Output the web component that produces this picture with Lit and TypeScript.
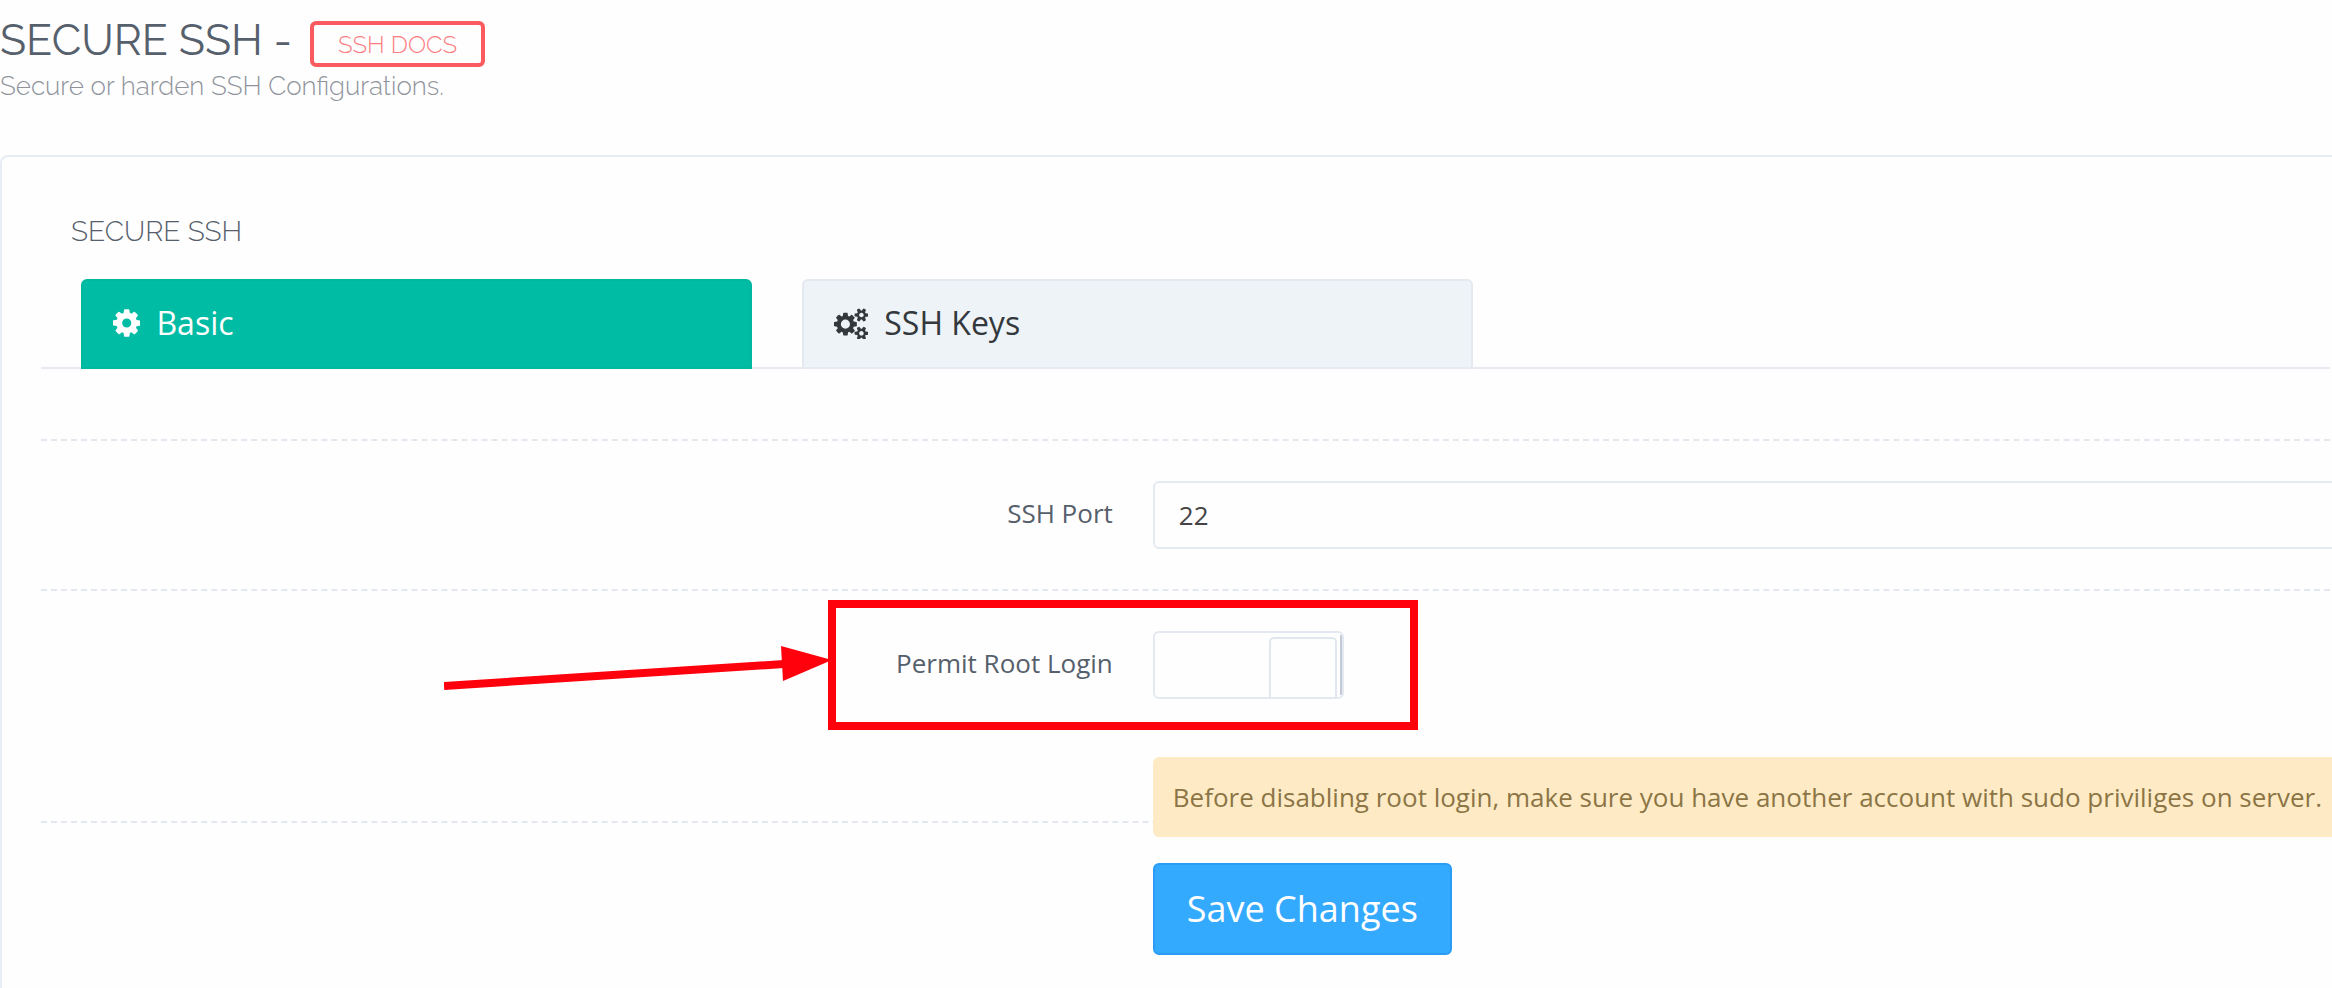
import { LitElement, html, css, svg } from "lit";
import { customElement, state } from "lit/decorators.js";

const cog = svg`<path d="M1024 896q0-106-75-181t-181-75-181 75-75 181 75 181 181 75 181-75 75-181zm512-109v222q0 12-8 23t-20 13l-185 28q-19 54-39 91 35 50 107 138 10 12 10 25t-9 23q-27 37-99 108t-94 71q-12 0-26-9l-138-108q-44 23-91 38-16 136-29 186-7 28-36 28h-222q-14 0-24.5-8.5t-11.5-21.5l-28-184q-49-16-90-37l-141 107q-10 9-25 9-14 0-25-11-126-114-165-168-7-10-7-23 0-12 8-23 15-21 51-66.5t54-70.5q-27-50-41-99l-183-27q-13-2-21-12.5t-8-23.5v-222q0-12 8-23t19-13l186-28q14-46 39-92-40-57-107-138-10-12-10-24 0-10 9-23 26-36 98.5-107.5t94.5-71.5q13 0 26 10l138 107q44-23 91-38 16-136 29-186 7-28 36-28h222q14 0 24.5 8.5t11.5 21.5l28 184q49 16 90 37l142-107q9-9 24-9 13 0 25 10 129 119 165 170 7 8 7 22 0 12-8 23-15 21-51 66.5t-54 70.5q26 50 41 98l183 28q13 2 21 12.5t8 23.5z"/>`;

const cogs = svg`<path d="M896 960q0-106-75-181t-181-75-181 75-75 181 75 181 181 75 181-75 75-181zm768 512q0-52-38-90t-90-38-90 38-38 90q0 53 37.5 90.5t90.5 37.5 90.5-37.5 37.5-90.5zm0-1024q0-52-38-90t-90-38-90 38-38 90q0 53 37.5 90.5t90.5 37.5 90.5-37.5 37.5-90.5zm-384 421v185q0 10-7 19.5t-16 10.5l-155 24q-11 35-32 76 34 48 90 115 7 11 7 20 0 12-7 19-23 30-82.5 89.5t-78.5 59.5q-11 0-21-7l-115-90q-37 19-77 31-11 108-23 155-7 24-30 24h-186q-11 0-20-7.5t-10-17.5l-23-153q-34-10-75-31l-118 89q-7 7-20 7-11 0-21-8-144-133-144-160 0-9 7-19 10-14 41-53t47-61q-23-44-35-82l-152-24q-10-1-17-9.5t-7-19.5v-185q0-10 7-19.5t16-10.5l155-24q11-35 32-76-34-48-90-115-7-11-7-20 0-12 7-20 22-30 82-89t79-59q11 0 21 7l115 90q34-18 77-32 11-108 23-154 7-24 30-24h186q11 0 20 7.5t10 17.5l23 153q34 10 75 31l118-89q8-7 20-7 11 0 21 8 144 133 144 160 0 8-7 19-12 16-42 54t-45 60q23 48 34 82l152 23q10 2 17 10.5t7 19.5zm640 533v140q0 16-149 31-12 27-30 52 51 113 51 138 0 4-4 7-122 71-124 71-8 0-46-47t-52-68q-20 2-30 2t-30-2q-14 21-52 68t-46 47q-2 0-124-71-4-3-4-7 0-25 51-138-18-25-30-52-149-15-149-31v-140q0-16 149-31 13-29 30-52-51-113-51-138 0-4 4-7 4-2 35-20t59-34 30-16q8 0 46 46.5t52 67.5q20-2 30-2t30 2q51-71 92-112l6-2q4 0 124 70 4 3 4 7 0 25-51 138 17 23 30 52 149 15 149 31zm0-1024v140q0 16-149 31-12 27-30 52 51 113 51 138 0 4-4 7-122 71-124 71-8 0-46-47t-52-68q-20 2-30 2t-30-2q-14 21-52 68t-46 47q-2 0-124-71-4-3-4-7 0-25 51-138-18-25-30-52-149-15-149-31v-140q0-16 149-31 13-29 30-52-51-113-51-138 0-4 4-7 4-2 35-20t59-34 30-16q8 0 46 46.5t52 67.5q20-2 30-2t30 2q51-71 92-112l6-2q4 0 124 70 4 3 4 7 0 25-51 138 17 23 30 52 149 15 149 31z"/>`;

@customElement("app-root")
export class AppRoot extends LitElement {
  @state() private tab = "basic";

  static styles = css`
    :host {
      display: flex;
      flex-direction: column;
      min-height: 100vh;
      box-sizing: border-box;
      padding-top: 16px;
      overflow: hidden;
      background: #fefefe;
      color: #56606c;
      font-family: "Open Sans", "Noto Sans", sans-serif;
      font-size: 26px;
      line-height: 36px;
    }
    * {
      box-sizing: border-box;
    }
    .head {
      height: 139px;
      font-family: Raleway, Lato, sans-serif;
      font-weight: 300;
    }
    .title {
      display: flex;
      gap: 18px;
      margin: 0;
      font-size: 43px;
      font-weight: 400;
      line-height: 48px;
    }
    .docs {
      height: 46px;
      margin-top: 5px;
      padding: 0 24px;
      border: 4px solid #fb5b5e;
      border-radius: 6px;
      color: #fb7d80;
      font-size: 24px;
      font-weight: 300;
      line-height: 40px;
      text-decoration: none;
    }
    .sub {
      margin: 1px 0 0;
      color: #8f949c;
    }
    .card {
      flex: 1;
      margin-right: -8px;
      padding: 57px 8px 0 39px;
      border: 2px solid #e8ecf4;
      border-bottom: 0;
      border-radius: 8px 8px 0 0;
    }
    .card-title {
      margin: 0;
      padding-left: 30px;
      font-family: Raleway, Lato, sans-serif;
      font-size: 28px;
      font-weight: 300;
      line-height: 36px;
    }
    .tabs {
      display: grid;
      grid-template-columns: repeat(3, minmax(0, 1fr));
      gap: 50px;
      margin-top: 29px;
      padding: 0 136px 0 40px;
      border-bottom: 2px solid #e8eaf2;
    }
    .tab {
      display: flex;
      align-items: center;
      gap: 16px;
      height: 90px;
      margin-bottom: -2px;
      padding: 0 30px 2px;
      border: 2px solid #e3e9ee;
      border-bottom-color: #e8eaf2;
      border-radius: 6px 6px 0 0;
      background: #eef3f7;
      color: #33383d;
      font: inherit;
      font-size: 32px;
      text-align: left;
    }
    .tab.active {
      border-color: #00b8a0;
      background: #00bca5;
      color: #fff;
    }
    .icon {
      flex: none;
      height: 32px;
      fill: currentColor;
    }
    .form {
      margin-top: 70px;
      border-top: 2px dashed #e3e8f0;
    }
    .row {
      display: grid;
      grid-template-columns: minmax(0, 17fr) minmax(0, 18fr);
      padding-top: 40px;
    }
    .ruled {
      border-bottom: 2px dashed #e3e8f0;
    }
    .spaced {
      padding-bottom: 40px;
    }
    .label {
      padding: 14px 40px 0 0;
      text-align: right;
    }
    .field {
      position: relative;
      min-width: 0;
    }
    .input {
      display: block;
      width: calc(100% + 8px);
      height: 68px;
      padding: 0 24px;
      border: 2px solid #e4eaf1;
      border-radius: 6px;
      background: #fefefe;
      color: #444;
      font: inherit;
    }
    .switch {
      appearance: none;
      position: relative;
      display: block;
      width: 191px;
      height: 68px;
      margin: 0;
      border: 2px solid #e4e9f1;
      border-radius: 6px;
      overflow: hidden;
    }
    .switch::before {
      content: "";
      position: absolute;
      inset: 4px 5px 0 auto;
      width: 64px;
      border: 2px solid #e1e7ef;
      border-bottom: 0;
      border-radius: 5px 5px 0 0;
    }
    .switch::after {
      content: "";
      position: absolute;
      inset: 2px 0 2px auto;
      width: 2px;
      background: #c3cad6;
    }
    .alert {
      position: relative;
      margin: 58px -8px -16px 0;
      padding: 22px 20px;
      border-radius: 6px;
      background: #feebc6;
      color: #8c7545;
      white-space: nowrap;
    }
    .save {
      height: 92px;
      padding: 0 32px;
      border: 2px solid #2a9cf5;
      border-radius: 6px;
      background: #34aaff;
      color: #fff;
      font: inherit;
      font-size: 36px;
    }
    .marker {
      position: absolute;
      top: -31px;
      left: -709px;
      width: 974px;
      height: 130px;
      pointer-events: none;
    }
  `;

  private tabButton(id: string, text: string, box: string, icon: unknown) {
    const on = this.tab === id;
    return html`<button
      class="tab ${on ? "active" : ""}"
      type="button"
      role="tab"
      aria-selected=${on}
      @click=${() => (this.tab = id)}
    >
      <svg class="icon" viewBox=${box} aria-hidden="true">${icon}</svg>${text}
    </button>`;
  }

  render() {
    return html`
      <header class="head">
        <h1 class="title"><span>SECURE SSH -</span><a class="docs" href="#docs">SSH DOCS</a></h1>
        <p class="sub">Secure or harden SSH Configurations.</p>
      </header>
      <main class="card">
        <h2 class="card-title">SECURE SSH</h2>
        <div class="tabs" role="tablist">
          ${this.tabButton("basic", "Basic", "0 0 1536 1792", cog)}
          ${this.tabButton("keys", "SSH Keys", "0 0 1920 1792", cogs)}
        </div>
        <form class="form" @submit=${(e: Event) => e.preventDefault()}>
          <div class="row ruled spaced">
            <label class="label" for="port">SSH Port</label>
            <div class="field"><input class="input" id="port" type="text" value="22" /></div>
          </div>
          <div class="row ruled">
            <label class="label" for="root">Permit Root Login</label>
            <div class="field">
              <input class="switch" id="root" type="checkbox" role="switch" />
              <svg class="marker" viewBox="0 0 974 130" aria-hidden="true">
                <rect x="388" y="4" width="582" height="122" fill="none" stroke="#ff000d" stroke-width="8" />
                <path d="M0 86 340 64" stroke="#ff000d" stroke-width="8" />
                <path d="M337 46 388 60 339 81z" fill="#ff000d" />
              </svg>
              <div class="alert" role="alert">
                Before disabling root login, make sure you have another account with sudo priviliges on server.
              </div>
            </div>
          </div>
          <div class="row">
            <span></span>
            <div class="field"><button class="save" type="submit">Save Changes</button></div>
          </div>
        </form>
      </main>
    `;
  }
}
